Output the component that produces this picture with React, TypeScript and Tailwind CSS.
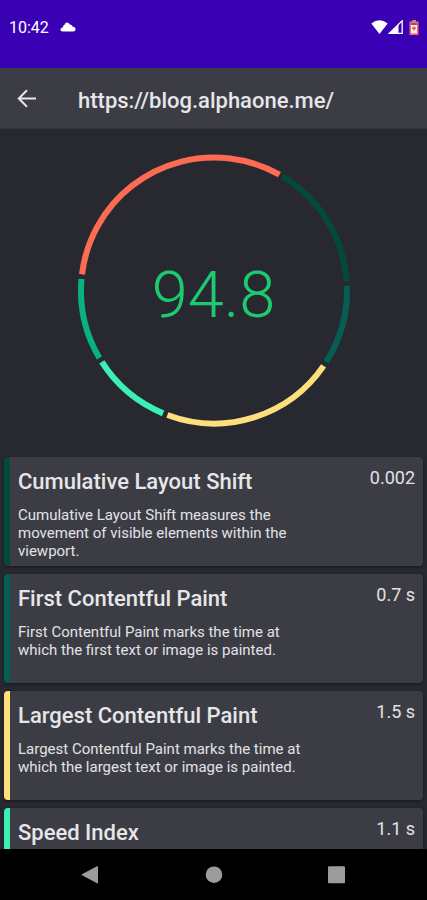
import React from "react";

type Metric = {
  name: string;
  value: string;
  description?: string;
  accent: string;
};

const metrics: Metric[] = [
  {
    name: "Cumulative Layout Shift",
    value: "0.002",
    description: "Cumulative Layout Shift measures the movement of visible elements within the viewport.",
    accent: "border-[#044a3c]",
  },
  {
    name: "First Contentful Paint",
    value: "0.7 s",
    description: "First Contentful Paint marks the time at which the first text or image is painted.",
    accent: "border-[#045f52]",
  },
  {
    name: "Largest Contentful Paint",
    value: "1.5 s",
    description: "Largest Contentful Paint marks the time at which the largest text or image is painted.",
    accent: "border-[#fddf7c]",
  },
  {
    name: "Speed Index",
    value: "1.1 s",
    accent: "border-[#3cf0b4]",
  },
];

// Degrees clockwise from twelve o'clock.
const arcs = [
  { from: 277, to: 389.5, color: "#fd6b52" },
  { from: 31, to: 86, color: "#044a3c" },
  { from: 88, to: 122.5, color: "#045f52" },
  { from: 124.5, to: 200.5, color: "#fddf7c" },
  { from: 202.5, to: 237.5, color: "#3cf0b4" },
  { from: 239.5, to: 275, color: "#08b27c" },
];

function StatusBar() {
  return (
    <div className="flex h-17 shrink-0 items-start justify-between bg-[#3a00b3] pt-4 pr-1 pl-[9px] text-white">
      <div className="flex h-6 items-center gap-[11px]">
        <span className="text-base">10:42</span>
        <svg width="16" height="12" viewBox="0 0 16 12" fill="currentColor" aria-hidden="true">
          <path d="M2.6 9.5Q.4 9.3.4 7.8Q.4 6 2.8 5.2Q3.2 3.2 4.6 2.8Q5 .6 7 .6Q9 .6 9.8 2.4Q12 2.4 12.6 4.6Q15.6 5.2 15.6 7.6Q15.6 9.3 13.6 9.5Z" />
        </svg>
      </div>
      <div className="flex h-6 items-center pb-0.5">
        <svg width="17" height="14" viewBox="0 0 17 14" fill="currentColor" aria-hidden="true">
          <path d="M8.5 14 0.3 3.4Q8.5-2.8 16.7 3.4Z" />
        </svg>
        <svg width="15" height="14" viewBox="0 0 15 14" aria-hidden="true">
          <path d="M1.4 13.3H14.2V.8Z" fill="none" stroke="currentColor" strokeWidth="1.3" />
          <path d="M1 13.5 10.5 4.4V13.5Z" fill="currentColor" />
        </svg>
        <svg className="mr-1 ml-1.5" width="10" height="15" viewBox="0 0 10 15" aria-hidden="true">
          <path d="M3 0H7V1.6H9.5V15H.5V1.6H3Z" fill="#ef6f6c" />
          <path d="M2 3H8V5H2Z" fill="#7052b8" />
          <path d="M2 5H8V13.2H2Z" fill="#ffece6" />
          <path d="M4.3 6.2H5.7V7.6H7V9H5.7V10.4H4.3V9H3V7.6H4.3Z" fill="#ee5a3c" />
        </svg>
      </div>
    </div>
  );
}

function ScoreGauge() {
  return (
    <section className="grid shrink-0 place-items-center pt-6 pb-7">
      <svg
        className="col-start-1 row-start-1"
        width="276"
        height="276"
        viewBox="0 0 276 276"
        fill="none"
        aria-hidden="true"
      >
        {arcs.map((arc) => (
          <circle
            key={arc.from}
            cx="138"
            cy="137.5"
            r="133"
            pathLength={360}
            stroke={arc.color}
            strokeWidth="6"
            strokeDasharray={`${arc.to - arc.from} 360`}
            transform={`rotate(${arc.from - 90} 138 137.5)`}
          />
        ))}
      </svg>
      <p className="col-start-1 row-start-1 pt-2 text-[65px] leading-none font-light text-[#1cca70]">94.8</p>
    </section>
  );
}

function MetricCard({ metric }: { metric: Metric }) {
  return (
    <li
      className={`flex h-[109px] shrink-0 justify-between rounded-[4px] border-l-[6px] bg-[#3c3d44] px-2 pt-[9px] shadow-[0_1px_3px_rgba(0,0,0,0.45)] ${metric.accent}`}
    >
      <div className="w-[300px]">
        <h2 className="text-[22px] leading-8 font-medium whitespace-nowrap text-[#e6e6ea]">{metric.name}</h2>
        {metric.description && (
          <p className="mt-2 text-[15px] leading-[18px] text-[#e2e2e6]">{metric.description}</p>
        )}
      </div>
      <span className="text-lg leading-6 whitespace-nowrap text-[#e2e2e6]">{metric.value}</span>
    </li>
  );
}

function NavBar() {
  return (
    <nav className="flex h-[51px] shrink-0 items-center justify-center gap-[105px] bg-black text-[#9c9c9c]">
      <button type="button" aria-label="Back">
        <svg width="18" height="20" viewBox="0 0 18 20" fill="currentColor">
          <path d="M15.5 1.5V18L0 9.7Z" stroke="currentColor" strokeLinejoin="round" />
        </svg>
      </button>
      <button type="button" aria-label="Home">
        <svg width="18" height="18" viewBox="0 0 18 18" fill="currentColor">
          <circle cx="9" cy="8.7" r="8.3" />
        </svg>
      </button>
      <button type="button" aria-label="Recent apps">
        <svg width="18" height="18" viewBox="0 0 18 18" fill="currentColor">
          <rect x="0" y=".2" width="17" height="17" rx="1" />
        </svg>
      </button>
    </nav>
  );
}

export default function App() {
  return (
    <div className="flex h-screen flex-col overflow-hidden bg-[#282930] font-['Roboto',sans-serif]">
      <StatusBar />
      <header className="flex h-[61px] shrink-0 items-center gap-10 border-b border-[#35363c] bg-[#3c3d44] px-4 pt-0.5 text-[#e6e6ea]">
        <button type="button" aria-label="Go back">
          <svg width="22" height="22" viewBox="0 0 22 22" fill="none" stroke="currentColor" strokeWidth="2">
            <path d="M20 10.5H3.5M11 2.3 2.8 10.5 11 18.7" />
          </svg>
        </button>
        <h1 className="pt-0.5 text-[22px] font-medium">https://blog.alphaone.me/</h1>
      </header>
      <main className="flex min-h-0 flex-1 flex-col overflow-hidden">
        <ScoreGauge />
        <ul className="flex flex-col gap-2 px-1">
          {metrics.map((metric) => (
            <MetricCard key={metric.name} metric={metric} />
          ))}
        </ul>
      </main>
      <NavBar />
    </div>
  );
}
